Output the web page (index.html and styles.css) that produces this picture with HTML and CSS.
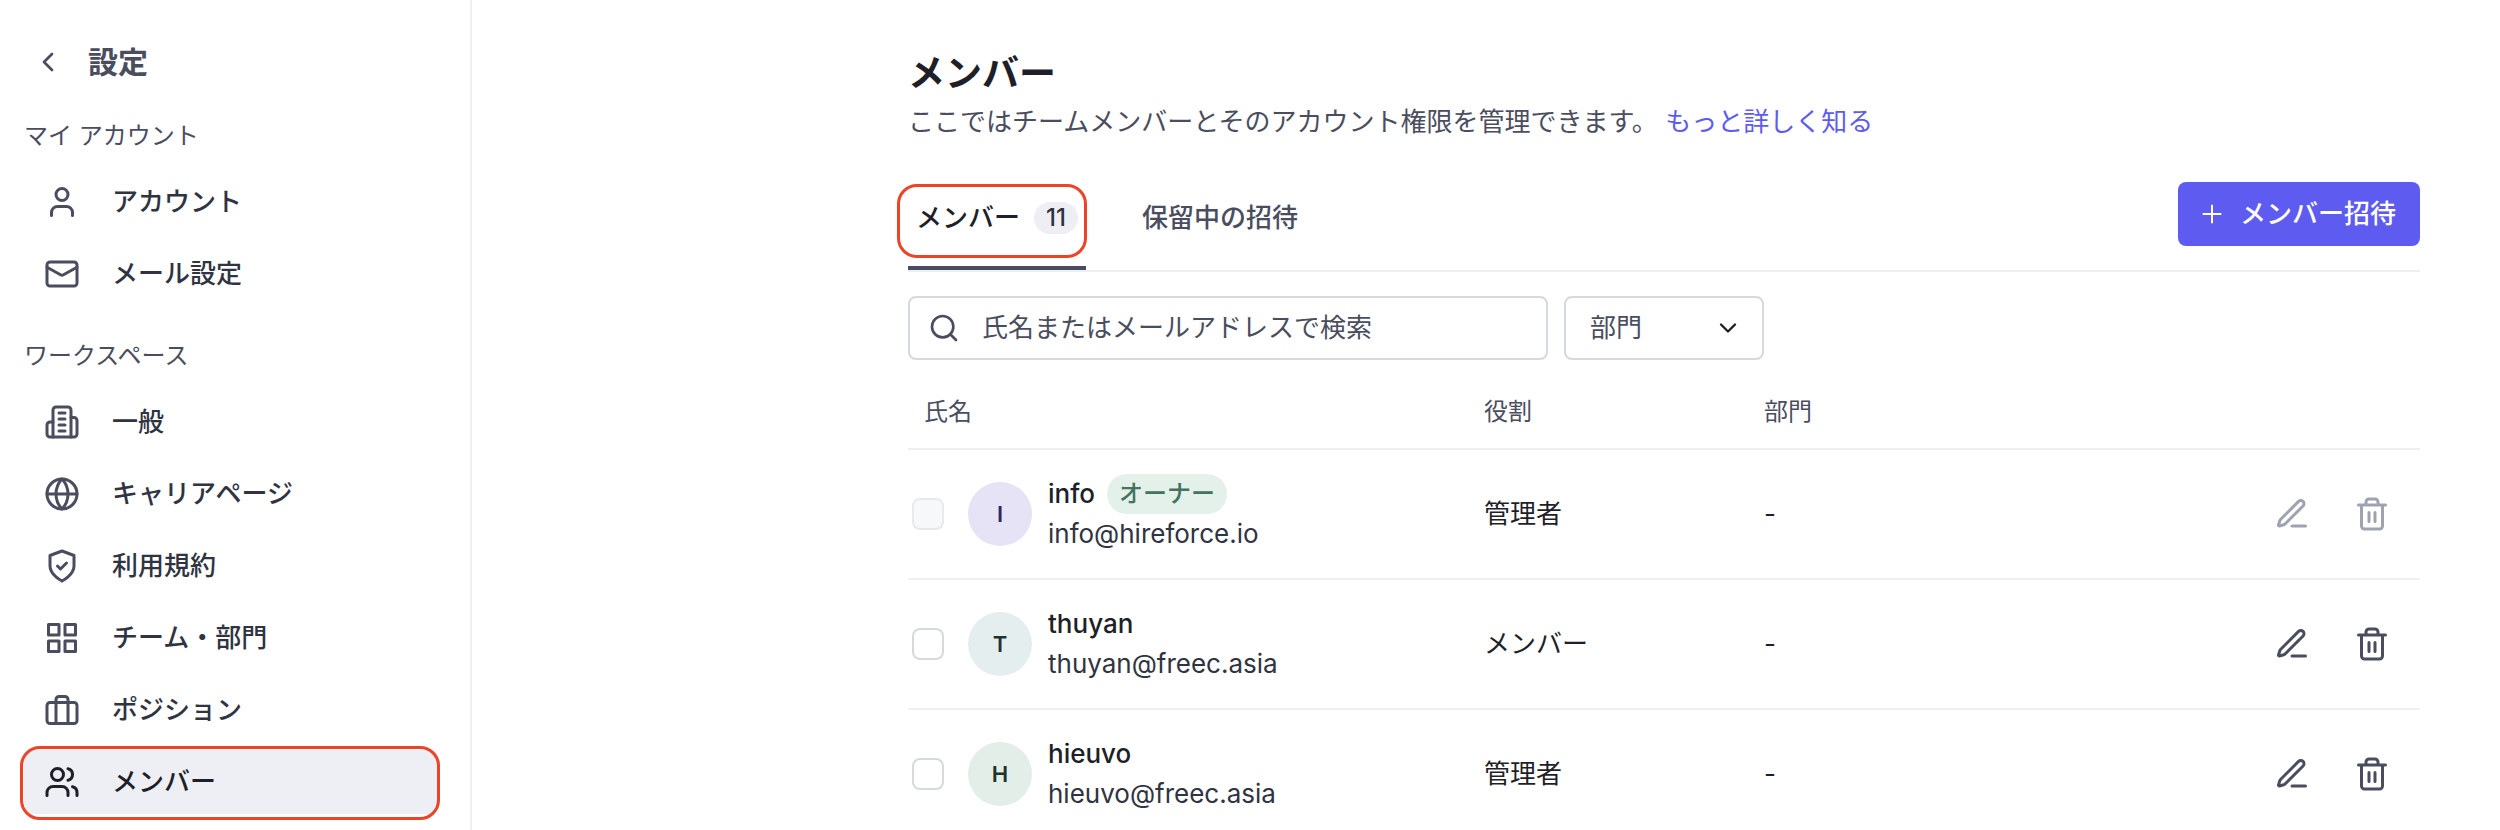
FILE: index.html
```html
<!DOCTYPE html>
<html lang="ja">
<head>
  <meta charset="UTF-8">
  <meta name="viewport" content="width=device-width, initial-scale=1">
  <title>メンバー</title>
  <link rel="stylesheet" href="styles.css">
</head>
<body>
  <!-- Icons -->
  <svg class="sprite" aria-hidden="true">
    <symbol id="i-back" viewBox="0 0 24 24"><path d="M15 18l-6-6 6-6"/></symbol>
    <symbol id="i-user" viewBox="0 0 24 24"><path d="M19 21v-2a4 4 0 0 0-4-4H9a4 4 0 0 0-4 4v2"/><circle cx="12" cy="7" r="4"/></symbol>
    <symbol id="i-mail" viewBox="0 0 24 24"><rect x="2" y="4" width="20" height="16" rx="2"/><path d="M2 7.5l9 5a2 2 0 0 0 2 0l9-5"/></symbol>
    <symbol id="i-building" viewBox="0 0 24 24"><path d="M6 22V4a2 2 0 0 1 2-2h8a2 2 0 0 1 2 2v18Z"/><path d="M6 12H4a2 2 0 0 0-2 2v6a2 2 0 0 0 2 2h2"/><path d="M18 9h2a2 2 0 0 1 2 2v9a2 2 0 0 1-2 2h-2"/><path d="M10 6h4M10 10h4M10 14h4M10 18h4"/></symbol>
    <symbol id="i-globe" viewBox="0 0 24 24"><circle cx="12" cy="12" r="10"/><path d="M2 12h20M12 2a14.5 14.5 0 0 0 0 20 14.5 14.5 0 0 0 0-20"/></symbol>
    <symbol id="i-shield" viewBox="0 0 24 24"><path d="M12 22s8-4 8-10V5l-8-3-8 3v7c0 6 8 10 8 10"/><path d="M9 12l2 2 4-4"/></symbol>
    <symbol id="i-grid" viewBox="0 0 24 24"><rect x="3" y="3" width="7" height="7"/><rect x="14" y="3" width="7" height="7"/><rect x="14" y="14" width="7" height="7"/><rect x="3" y="14" width="7" height="7"/></symbol>
    <symbol id="i-case" viewBox="0 0 24 24"><rect x="2" y="7" width="20" height="14" rx="2"/><path d="M16 21V5a2 2 0 0 0-2-2h-4a2 2 0 0 0-2 2v16"/></symbol>
    <symbol id="i-users" viewBox="0 0 24 24"><path d="M16 21v-2a4 4 0 0 0-4-4H6a4 4 0 0 0-4 4v2"/><circle cx="9" cy="7" r="4"/><path d="M22 21v-2a4 4 0 0 0-3-3.87M16 3.13a4 4 0 0 1 0 7.75"/></symbol>
    <symbol id="i-plus" viewBox="0 0 24 24"><path d="M5 12h14M12 5v14"/></symbol>
    <symbol id="i-search" viewBox="0 0 24 24"><circle cx="11" cy="11" r="8"/><path d="M21 21l-4.3-4.3"/></symbol>
    <symbol id="i-down" viewBox="0 0 24 24"><path d="M6 9l6 6 6-6"/></symbol>
    <symbol id="i-edit" viewBox="0 0 24 24"><path d="M12 20h9"/><path d="M16.376 3.622a1 1 0 0 1 3.002 3.002L7.368 18.635a2 2 0 0 1-.855.506l-2.872.838a.5.5 0 0 1-.62-.62l.838-2.872a2 2 0 0 1 .506-.854z"/></symbol>
    <symbol id="i-trash" viewBox="0 0 24 24"><path d="M3 6h18M19 6v14a2 2 0 0 1-2 2H7a2 2 0 0 1-2-2V6M8 6V4a2 2 0 0 1 2-2h4a2 2 0 0 1 2 2v2M10 11v6M14 11v6"/></symbol>
  </svg>

  <div class="layout">
    <aside class="sidebar">
      <a href="#" class="sidebar-header">
        <svg class="icon icon-sm"><use href="#i-back"/></svg>
        <span>設定</span>
      </a>

      <nav class="section">
        <h2>マイ アカウント</h2>
        <ul>
          <li><a href="#" class="nav-item"><svg class="icon"><use href="#i-user"/></svg>アカウント</a></li>
          <li><a href="#" class="nav-item"><svg class="icon"><use href="#i-mail"/></svg>メール設定</a></li>
        </ul>
      </nav>

      <nav class="section">
        <h2>ワークスペース</h2>
        <ul>
          <li><a href="#" class="nav-item"><svg class="icon"><use href="#i-building"/></svg>一般</a></li>
          <li><a href="#" class="nav-item"><svg class="icon"><use href="#i-globe"/></svg>キャリアページ</a></li>
          <li><a href="#" class="nav-item"><svg class="icon"><use href="#i-shield"/></svg>利用規約</a></li>
          <li><a href="#" class="nav-item"><svg class="icon"><use href="#i-grid"/></svg>チーム・部門</a></li>
          <li><a href="#" class="nav-item"><svg class="icon"><use href="#i-case"/></svg>ポジション</a></li>
          <li><a href="#" class="nav-item active"><svg class="icon"><use href="#i-users"/></svg>メンバー</a></li>
        </ul>
      </nav>
    </aside>

    <main class="main">
      <h1>メンバー</h1>
      <p class="description">ここではチームメンバーとそのアカウント権限を管理できます。 <a href="#">もっと詳しく知る</a></p>

      <div class="toolbar">
        <div class="tabs">
          <button type="button" class="tab active">メンバー <span class="count">11</span></button>
          <button type="button" class="tab">保留中の招待</button>
        </div>
        <button type="button" class="invite"><svg class="icon icon-sm icon-plus"><use href="#i-plus"/></svg>メンバー招待</button>
      </div>

      <div class="filters">
        <label class="search">
          <svg class="icon icon-sm"><use href="#i-search"/></svg>
          <input type="text" placeholder="氏名またはメールアドレスで検索" aria-label="氏名またはメールアドレスで検索">
        </label>
        <label class="select">
          <select aria-label="部門">
            <option>部門</option>
          </select>
          <svg class="icon icon-down"><use href="#i-down"/></svg>
        </label>
      </div>

      <table class="members">
        <colgroup>
          <col class="col-name">
          <col class="col-role">
          <col>
          <col class="col-actions">
        </colgroup>
        <thead>
          <tr>
            <th>氏名</th>
            <th>役割</th>
            <th>部門</th>
            <th></th>
          </tr>
        </thead>
        <tbody>
          <tr>
            <td>
              <div class="member">
                <input type="checkbox" aria-label="info" disabled>
                <span class="avatar avatar-purple">I</span>
                <div>
                  <div class="name">info <span class="owner">オーナー</span></div>
                  <div class="email">info@hireforce.io</div>
                </div>
              </div>
            </td>
            <td>管理者</td>
            <td>-</td>
            <td>
              <div class="actions">
                <button type="button" aria-label="編集" disabled><svg class="icon"><use href="#i-edit"/></svg></button>
                <button type="button" aria-label="削除" disabled><svg class="icon"><use href="#i-trash"/></svg></button>
              </div>
            </td>
          </tr>
          <tr>
            <td>
              <div class="member">
                <input type="checkbox" aria-label="thuyan">
                <span class="avatar avatar-teal">T</span>
                <div>
                  <div class="name">thuyan</div>
                  <div class="email">thuyan@freec.asia</div>
                </div>
              </div>
            </td>
            <td>メンバー</td>
            <td>-</td>
            <td>
              <div class="actions">
                <button type="button" aria-label="編集"><svg class="icon"><use href="#i-edit"/></svg></button>
                <button type="button" aria-label="削除"><svg class="icon"><use href="#i-trash"/></svg></button>
              </div>
            </td>
          </tr>
          <tr>
            <td>
              <div class="member">
                <input type="checkbox" aria-label="hieuvo">
                <span class="avatar avatar-green">H</span>
                <div>
                  <div class="name">hieuvo</div>
                  <div class="email">hieuvo@freec.asia</div>
                </div>
              </div>
            </td>
            <td>管理者</td>
            <td>-</td>
            <td>
              <div class="actions">
                <button type="button" aria-label="編集"><svg class="icon"><use href="#i-edit"/></svg></button>
                <button type="button" aria-label="削除"><svg class="icon"><use href="#i-trash"/></svg></button>
              </div>
            </td>
          </tr>
        </tbody>
      </table>
    </main>
  </div>
</body>
</html>
```

FILE: styles.css
```css
:root {
  --primary: #5e5bf1;
  --text: #1e1f28;
  --text-nav: #303341;
  --text-secondary: #4a4d5e;
  --border: #eeeff4;
  --border-input: #d4dade;
  --surface: #eeeff4;
  --highlight: #ed4328;
}

* {
  margin: 0;
  padding: 0;
  box-sizing: border-box;
}

body {
  font-family: Inter, "Noto Sans CJK JP", sans-serif;
  font-size: 26px;
  line-height: 40px;
  color: var(--text);
  background: #fff;
}

a {
  color: inherit;
  text-decoration: none;
}

ul {
  list-style: none;
}

button,
input,
select {
  font: inherit;
  color: inherit;
  background: none;
  border: none;
}

button {
  cursor: pointer;
}

.sprite {
  display: none;
}

.icon {
  flex: none;
  display: block;
  width: 36px;
  height: 36px;
  fill: none;
  stroke: currentColor;
  stroke-width: 2;
  stroke-linecap: round;
  stroke-linejoin: round;
}

.icon-sm {
  width: 32px;
  height: 32px;
}

.layout {
  display: flex;
  height: 100vh;
  overflow: hidden;
}

/* Sidebar */
.sidebar {
  flex: none;
  width: 472px;
  padding: 38px 30px 0 24px;
  border-right: 2px solid var(--border);
  color: var(--text-secondary);
}

.sidebar-header {
  display: flex;
  align-items: center;
  gap: 24px;
  height: 48px;
  padding-left: 8px;
  font-size: 30px;
  font-weight: 600;
}

.section {
  margin-top: 30px;
}

.section h2 {
  margin-bottom: 14px;
  font-size: 24px;
  font-weight: 400;
}

.section ul {
  display: grid;
  gap: 8px;
}

.nav-item {
  position: relative;
  display: flex;
  align-items: center;
  gap: 32px;
  height: 64px;
  padding-left: 20px;
  border-radius: 12px;
  font-weight: 500;
  color: var(--text-nav);
}

.nav-item .icon {
  color: var(--text-secondary);
}

.nav-item.active,
.nav-item.active .icon {
  color: var(--text);
}

.nav-item.active {
  background: var(--surface);
}

.nav-item.active::after,
.tab.active::after {
  content: "";
  position: absolute;
  border: 3px solid var(--highlight);
  border-radius: 20px;
  pointer-events: none;
}

.nav-item.active::after {
  inset: -4px 0 -6px -4px;
}

/* Main */
.main {
  flex: 1;
  min-width: 0;
  padding: 50px 80px 0 436px;
  overflow-y: auto;
  scrollbar-width: none;
}

h1 {
  margin-bottom: 4px;
  font-size: 37px;
  font-weight: 600;
  line-height: 48px;
}

.description {
  color: var(--text-secondary);
}

.description a {
  color: var(--primary);
}

.toolbar {
  display: flex;
  justify-content: space-between;
  align-items: flex-start;
  margin-top: 40px;
  border-bottom: 2px solid var(--border);
}

.tabs {
  display: flex;
  gap: 48px;
}

.tab {
  position: relative;
  display: flex;
  align-items: center;
  gap: 14px;
  padding: 16px 8px 28px;
  border-bottom: 4px solid transparent;
  font-weight: 500;
  line-height: 40px;
  color: var(--text-secondary);
}

.tab.active {
  color: var(--text);
  border-color: var(--text-secondary);
}

.tab.active::after {
  inset: 2px -1px 8px -11px;
}

.count {
  width: 44px;
  border-radius: 16px;
  background: var(--surface);
  font-size: 24px;
  line-height: 32px;
  text-align: center;
  color: var(--text-nav);
}

.invite {
  display: flex;
  align-items: center;
  gap: 12px;
  height: 64px;
  padding: 0 24px 0 18px;
  border-radius: 8px;
  background: var(--primary);
  font-weight: 500;
  color: #fff;
}

.icon-plus {
  stroke-width: 1.5;
  stroke-linecap: butt;
}

.filters {
  display: flex;
  gap: 16px;
  margin-top: 24px;
}

.search,
.select {
  display: flex;
  align-items: center;
  height: 64px;
  border: 2px solid var(--border-input);
  border-radius: 8px;
  color: var(--text-secondary);
}

.search {
  gap: 22px;
  width: 640px;
  padding: 0 18px;
}

.search input {
  flex: 1;
  min-width: 0;
  outline: none;
}

.search input::placeholder {
  color: var(--text-secondary);
  opacity: 1;
}

.select {
  position: relative;
  width: 200px;
}

.select select {
  width: 100%;
  height: 100%;
  padding-left: 24px;
  appearance: none;
  outline: none;
}

.icon-down {
  position: absolute;
  right: 20px;
  width: 28px;
  height: 28px;
  color: var(--text);
  pointer-events: none;
}

/* Members table */
.members {
  width: 100%;
  table-layout: fixed;
  border-collapse: separate;
  border-spacing: 0;
}

.col-name {
  width: 560px;
}

.col-role {
  width: 280px;
}

.col-actions {
  width: 176px;
}

.members th {
  padding: 32px 16px 16px;
  border-bottom: 2px solid var(--border);
  font-size: 24px;
  font-weight: 400;
  text-align: left;
  color: var(--text-secondary);
}

.members td {
  padding: 24px 16px;
  border-bottom: 2px solid var(--border);
}

.members td:first-child {
  padding-left: 4px;
}

.member {
  display: flex;
  align-items: center;
}

.member input {
  flex: none;
  width: 32px;
  height: 32px;
  margin-right: 24px;
  appearance: none;
  border: 2px solid var(--border-input);
  border-radius: 8px;
}

.member input:disabled {
  background: #f7f8fa;
  border-color: #e7e9ec;
}

.avatar {
  flex: none;
  width: 64px;
  margin-right: 16px;
  border-radius: 50%;
  font-size: 22px;
  font-weight: 600;
  line-height: 64px;
  text-align: center;
}

.avatar-purple {
  background: #e6e3f6;
  color: #33265f;
}

.avatar-teal {
  background: #e5eeef;
  color: #1f3235;
}

.avatar-green {
  background: #e4eee8;
  color: #1f3529;
}

.name {
  display: flex;
  gap: 12px;
  font-weight: 500;
}

.owner {
  padding: 0 12px;
  border-radius: 20px;
  background: #e4f1eb;
  font-size: 24px;
  font-weight: 500;
  color: #447360;
}

.email {
  color: var(--text-nav);
}

.actions {
  display: flex;
  justify-content: flex-end;
  gap: 44px;
  padding-right: 14px;
  color: var(--text-secondary);
}

.actions button:disabled {
  color: #9ea3b0;
  cursor: default;
}
```
